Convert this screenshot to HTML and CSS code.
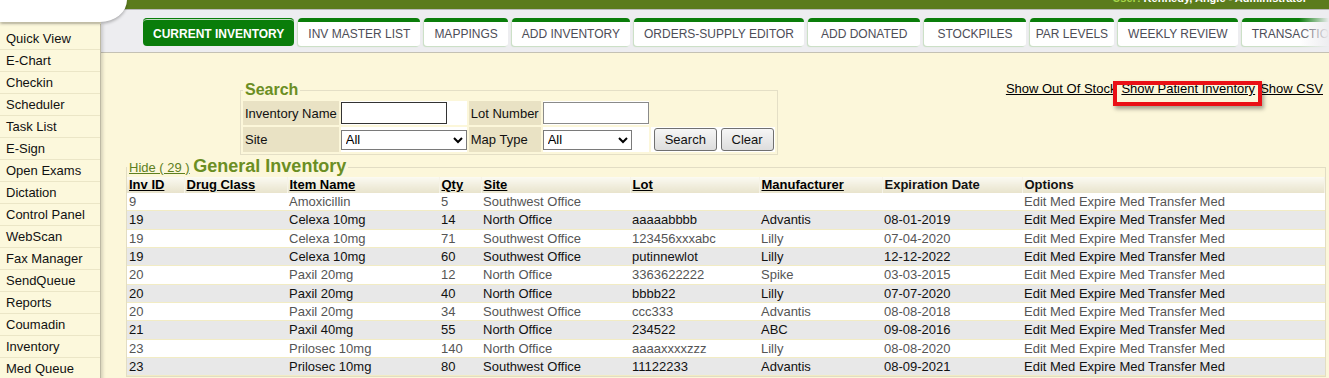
FILE: index.html
```html
<!DOCTYPE html>
<html lang="en">
<head>
    <meta charset="UTF-8">
    <meta name="viewport" content="width=device-width, initial-scale=1.0">
    <title>Current Inventory</title>
    <link rel="stylesheet" href="styles.css">
</head>
<body>
    <div class="topbar">
        <span class="user"><span class="user-label">User:</span> Kennedy, Angie - Administrator</span>
    </div>
    <div class="logo"></div>

    <div class="page">
        <nav class="sidebar">
            <ul>
                <li><a href="#">Quick View</a></li>
                <li><a href="#">E-Chart</a></li>
                <li><a href="#">Checkin</a></li>
                <li><a href="#">Scheduler</a></li>
                <li><a href="#">Task List</a></li>
                <li><a href="#">E-Sign</a></li>
                <li><a href="#">Open Exams</a></li>
                <li><a href="#">Dictation</a></li>
                <li><a href="#">Control Panel</a></li>
                <li><a href="#">WebScan</a></li>
                <li><a href="#">Fax Manager</a></li>
                <li><a href="#">SendQueue</a></li>
                <li><a href="#">Reports</a></li>
                <li><a href="#">Coumadin</a></li>
                <li><a href="#">Inventory</a></li>
                <li><a href="#">Med Queue</a></li>
            </ul>
        </nav>

        <div class="main">
            <div class="tabs">
                <a href="#" class="tab active">CURRENT INVENTORY</a>
                <a href="#" class="tab">INV MASTER LIST</a>
                <a href="#" class="tab">MAPPINGS</a>
                <a href="#" class="tab">ADD INVENTORY</a>
                <a href="#" class="tab">ORDERS-SUPPLY EDITOR</a>
                <a href="#" class="tab wide">ADD DONATED</a>
                <a href="#" class="tab wide">STOCKPILES</a>
                <a href="#" class="tab narrow">PAR LEVELS</a>
                <a href="#" class="tab">WEEKLY REVIEW</a>
                <a href="#" class="tab">TRANSACTIONS</a>
            </div>

            <div class="content">
                <div class="toolbar">
                    <fieldset class="search">
                        <legend>Search</legend>
                        <table>
                            <tr>
                                <td class="label">Inventory Name</td>
                                <td class="field"><input type="text" class="focused"></td>
                                <td class="label">Lot Number</td>
                                <td class="field"><input type="text"></td>
                            </tr>
                            <tr>
                                <td class="label">Site</td>
                                <td class="field"><select class="site"><option>All</option></select></td>
                                <td class="label">Map Type</td>
                                <td class="field"><select class="map"><option>All</option></select></td>
                                <td class="field buttons"><button>Search</button> <button>Clear</button></td>
                            </tr>
                        </table>
                    </fieldset>

                    <div class="links">
                        <a href="#">Show Out Of Stock</a>
                        <a href="#" class="marked">Show Patient Inventory</a>
                        <a href="#">Show CSV</a>
                    </div>
                </div>

                <fieldset class="inventory">
                    <legend><a href="#" class="hide">Hide ( 29 )</a> <strong>General Inventory</strong></legend>
                    <table class="grid">
                        <colgroup>
                            <col class="c-id">
                            <col class="c-class">
                            <col class="c-name">
                            <col class="c-qty">
                            <col class="c-site">
                            <col class="c-lot">
                            <col class="c-maker">
                            <col class="c-date">
                            <col>
                        </colgroup>
                        <thead>
                            <tr>
                                <th><a href="#">Inv ID</a></th>
                                <th><a href="#">Drug Class</a></th>
                                <th><a href="#">Item Name</a></th>
                                <th><a href="#">Qty</a></th>
                                <th><a href="#">Site</a></th>
                                <th><a href="#">Lot</a></th>
                                <th><a href="#">Manufacturer</a></th>
                                <th>Expiration Date</th>
                                <th>Options</th>
                            </tr>
                        </thead>
                        <tbody>
                            <tr>
                                <td>9</td><td></td><td>Amoxicillin</td><td>5</td><td>Southwest Office</td><td></td><td></td><td></td>
                                <td class="opts"><a href="#">Edit Med</a> <a href="#">Expire Med</a> <a href="#">Transfer Med</a></td>
                            </tr>
                            <tr>
                                <td>19</td><td></td><td>Celexa 10mg</td><td>14</td><td>North Office</td><td>aaaaabbbb</td><td>Advantis</td><td>08-01-2019</td>
                                <td class="opts"><a href="#">Edit Med</a> <a href="#">Expire Med</a> <a href="#">Transfer Med</a></td>
                            </tr>
                            <tr>
                                <td>19</td><td></td><td>Celexa 10mg</td><td>71</td><td>Southwest Office</td><td>123456xxxabc</td><td>Lilly</td><td>07-04-2020</td>
                                <td class="opts"><a href="#">Edit Med</a> <a href="#">Expire Med</a> <a href="#">Transfer Med</a></td>
                            </tr>
                            <tr>
                                <td>19</td><td></td><td>Celexa 10mg</td><td>60</td><td>Southwest Office</td><td>putinnewlot</td><td>Lilly</td><td>12-12-2022</td>
                                <td class="opts"><a href="#">Edit Med</a> <a href="#">Expire Med</a> <a href="#">Transfer Med</a></td>
                            </tr>
                            <tr>
                                <td>20</td><td></td><td>Paxil 20mg</td><td>12</td><td>North Office</td><td>3363622222</td><td>Spike</td><td>03-03-2015</td>
                                <td class="opts"><a href="#">Edit Med</a> <a href="#">Expire Med</a> <a href="#">Transfer Med</a></td>
                            </tr>
                            <tr>
                                <td>20</td><td></td><td>Paxil 20mg</td><td>40</td><td>North Office</td><td>bbbb22</td><td>Lilly</td><td>07-07-2020</td>
                                <td class="opts"><a href="#">Edit Med</a> <a href="#">Expire Med</a> <a href="#">Transfer Med</a></td>
                            </tr>
                            <tr>
                                <td>20</td><td></td><td>Paxil 20mg</td><td>34</td><td>Southwest Office</td><td>ccc333</td><td>Advantis</td><td>08-08-2018</td>
                                <td class="opts"><a href="#">Edit Med</a> <a href="#">Expire Med</a> <a href="#">Transfer Med</a></td>
                            </tr>
                            <tr>
                                <td>21</td><td></td><td>Paxil 40mg</td><td>55</td><td>North Office</td><td>234522</td><td>ABC</td><td>09-08-2016</td>
                                <td class="opts"><a href="#">Edit Med</a> <a href="#">Expire Med</a> <a href="#">Transfer Med</a></td>
                            </tr>
                            <tr>
                                <td>23</td><td></td><td>Prilosec 10mg</td><td>140</td><td>North Office</td><td>aaaaxxxxzzz</td><td>Lilly</td><td>08-08-2020</td>
                                <td class="opts"><a href="#">Edit Med</a> <a href="#">Expire Med</a> <a href="#">Transfer Med</a></td>
                            </tr>
                            <tr>
                                <td>23</td><td></td><td>Prilosec 10mg</td><td>80</td><td>Southwest Office</td><td>11122233</td><td>Advantis</td><td>08-09-2021</td>
                                <td class="opts"><a href="#">Edit Med</a> <a href="#">Expire Med</a> <a href="#">Transfer Med</a></td>
                            </tr>
                        </tbody>
                    </table>
                </fieldset>
            </div>
        </div>
    </div>
</body>
</html>
```

FILE: styles.css
```css
* {
    box-sizing: border-box;
}

html,
body {
    margin: 0;
    overflow: hidden;
}

body {
    position: relative;
    font-family: "Liberation Sans", Arial, sans-serif;
    font-size: 13px;
    color: #111;
    background-color: #fcf7da;
}

/* top strip */
.topbar {
    height: 10px;
    background-color: #5b7b1c;
    border-bottom: 1px solid #b9b9b9;
    overflow: hidden;
    text-align: right;
    padding-right: 22px;
}

.user {
    display: block;
    margin-top: -8px;
    line-height: 12px;
    font-size: 11px;
    font-weight: bold;
    color: #fff;
}

.user-label {
    color: #a6d74a;
}

.logo {
    position: absolute;
    top: 0;
    left: 0;
    z-index: 2;
    width: 127px;
    height: 22px;
    background-color: #fff;
    border-bottom-right-radius: 27px 22px;
    box-shadow: 0 2px 3px rgba(0, 0, 0, 0.25);
}

.page {
    display: flex;
}

/* left menu */
.sidebar {
    position: relative;
    z-index: 1;
    flex: none;
    width: 101px;
    height: 360px;
    margin-top: 14px;
    padding-top: 4px;
    background-color: #fcf8dc;
    border-right: 1px solid #bdb9a4;
    box-shadow: 2px 0 3px rgba(0, 0, 0, 0.15);
}

.sidebar ul {
    list-style: none;
    margin: 0;
    padding: 0;
}

.sidebar a {
    display: block;
    height: 22px;
    line-height: 21px;
    padding-left: 6px;
    border-bottom: 1px solid #ebe6c7;
    color: #111;
    text-decoration: none;
}

.main {
    flex: 1;
    min-width: 0;
}

/* tabs */
.tabs {
    position: relative;
    display: flex;
    gap: 4px;
    height: 43px;
    padding: 8px 0 0 42px;
    background-color: #ededf0;
    border-bottom: 1px solid #c4c1b4;
    overflow: hidden;
}

.tabs::after {
    content: "";
    position: absolute;
    top: 0;
    right: 0;
    bottom: 0;
    width: 30px;
    background: linear-gradient(to right, rgba(237, 237, 240, 0), #ededf0);
}

.tab {
    flex: none;
    height: 28px;
    padding: 0 10px;
    border-top: 4px solid #0a7d0a;
    border-radius: 4px 4px 3px 3px;
    background-color: #fff;
    box-shadow: -1px 1px 1px #c8dec3;
    color: #4d4d57;
    font-size: 12px;
    line-height: 24px;
    white-space: nowrap;
    text-decoration: none;
}

.tab.wide {
    padding: 0 13px;
}

.tab.narrow {
    padding: 0 6px;
}

.tab.active {
    border-top: 1px solid #0a7d0a;
    padding-top: 3px;
    border-radius: 4px;
    background-color: #0a7d0a;
    box-shadow: inset 0 1px 0 rgba(255, 255, 255, 0.75);
    color: #fff;
    font-weight: bold;
}

/* page body */
.content {
    padding: 0 3px 0 25px;
}

.toolbar {
    display: flex;
    align-items: flex-start;
    padding-top: 28px;
}

fieldset {
    margin: 0;
    min-width: 0;
}

.search {
    margin-left: 114px;
    padding: 0;
    border: 1px solid #e4dfc6;
}

.search legend {
    margin-left: 2px;
    padding: 0 2px;
    line-height: 18px;
    font-size: 16px;
    font-weight: bold;
    color: #6b8e23;
}

.search table {
    border-spacing: 2px;
}

.search td {
    padding: 1px 0;
}

.search td.label {
    padding: 0 2px;
    background-color: #e9e2c4;
    white-space: nowrap;
}

.search td.field {
    background-color: #fff;
}

.search input {
    display: block;
    width: 106px;
    height: 22px;
    border: 1px solid #8a8a8a;
    font-family: inherit;
    font-size: 13px;
}

.search input.focused {
    border-color: #333;
}

.search select {
    display: block;
    height: 20px;
    border: 1px solid #7a7a7a;
    background-color: #fff;
    font-family: inherit;
    font-size: 13px;
    color: #000;
}

.search select.site {
    width: 126px;
}

.search select.map {
    width: 89px;
}

.search td.buttons {
    padding-left: 3px;
    padding-right: 1px;
    white-space: nowrap;
}

.search button {
    height: 23px;
    padding: 0 10px;
    border: 1px solid #707070;
    border-radius: 3px;
    background: linear-gradient(#f6f6f6, #dddddd);
    font-family: inherit;
    font-size: 13px;
    color: #111;
}

.links {
    display: flex;
    gap: 5px;
    margin-left: auto;
    padding-right: 3px;
    line-height: 15px;
}

.links a {
    color: #000;
}

.links a.marked {
    position: relative;
}

.links a.marked::after {
    content: "";
    position: absolute;
    top: 0;
    left: -8px;
    right: -7px;
    bottom: -10px;
    border: 4px solid #ea1016;
    box-shadow: 2px 3px 4px rgba(0, 0, 0, 0.35);
}

/* inventory list */
.inventory {
    margin-top: 2px;
    padding: 0;
    border: 1px solid #e2ddc4;
}

.inventory legend {
    padding: 0 2px;
    line-height: 19px;
}

.inventory .hide {
    color: #5e7f1e;
    font-size: 13px;
}

.inventory strong {
    color: #6b8e23;
    font-size: 18px;
}

.grid {
    width: 100%;
    border-collapse: collapse;
    table-layout: fixed;
}

.c-id { width: 57px; }
.c-class { width: 103px; }
.c-name { width: 152px; }
.c-qty { width: 42px; }
.c-site { width: 149px; }
.c-lot { width: 129px; }
.c-maker { width: 123px; }
.c-date { width: 140px; }

.grid th {
    padding: 0 2px;
    line-height: 16px;
    text-align: left;
    white-space: nowrap;
    background: linear-gradient(#fbfaf2, #e8e3cc);
    border-right: 1px solid #f6f3e7;
}

.grid th a {
    color: #000;
}

.grid td {
    padding: 0 2px;
    line-height: 17.33px;
    white-space: nowrap;
    overflow: hidden;
    background-color: #fff;
    color: #555;
    border-bottom: 1px solid #f2ecc4;
}

.grid tbody tr:nth-child(even) td {
    background-color: #e8e8e8;
    color: #111;
}

.grid td.opts a {
    color: inherit;
    text-decoration: none;
}
```
